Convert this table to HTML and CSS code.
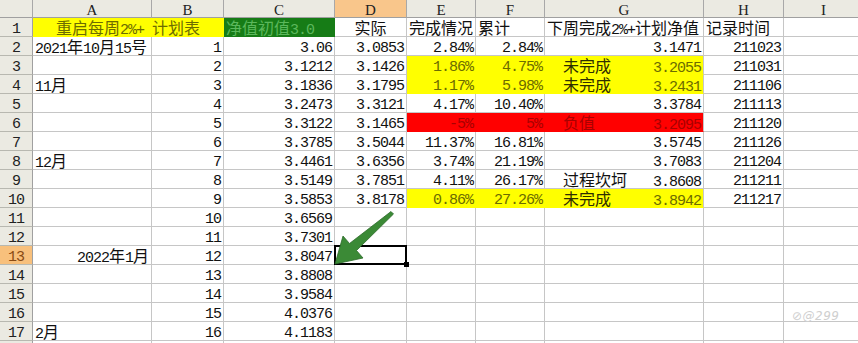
FILE: index.html
```html
<!DOCTYPE html>
<html lang="zh">
<head>
<meta charset="utf-8">
<title>计划表</title>
<link rel="stylesheet" href="styles.css">
</head>
<body>
<div class="wrap">
  <div class="sheet">
    <div class="ch corner"></div><div class="ch">A</div><div class="ch">B</div><div class="ch">C</div><div class="ch sel">D</div><div class="ch">E</div><div class="ch">F</div><div class="ch">G</div><div class="ch">H</div><div class="ch">I</div>

    <div class="rh">1</div>
    <div class="c y ctr span2">重启每周<span class="m">2%+ </span>计划表</div>
    <div class="c gr">净值初值<span class="m">3.0</span></div>
    <div class="c ctr">实际</div>
    <div class="c">完成情况</div>
    <div class="c">累计</div>
    <div class="c">下周完成<span class="m">2%+</span>计划净值</div>
    <div class="c">记录时间</div>
    <div class="c"></div>

    <div class="rh">2</div>
    <div class="c"><span class="m">2021</span>年<span class="m">10</span>月<span class="m">15</span>号</div>
    <div class="c n">1</div><div class="c n">3.06</div><div class="c n">3.0853</div><div class="c n">2.84%</div><div class="c n">2.84%</div><div class="c n">3.1471</div><div class="c n">211023</div><div class="c"></div>

    <div class="rh">3</div>
    <div class="c"></div>
    <div class="c n">2</div><div class="c n">3.1212</div><div class="c n">3.1426</div><div class="c n y">1.86%</div><div class="c n y">4.75%</div>
    <div class="c gl y"><span class="lbl">未完成</span><span class="m">3.2055</span></div>
    <div class="c n">211031</div><div class="c"></div>

    <div class="rh">4</div>
    <div class="c"><span class="m">11</span>月</div>
    <div class="c n">3</div><div class="c n">3.1836</div><div class="c n">3.1795</div><div class="c n y">1.17%</div><div class="c n y">5.98%</div>
    <div class="c gl y"><span class="lbl">未完成</span><span class="m">3.2431</span></div>
    <div class="c n">211106</div><div class="c"></div>

    <div class="rh">5</div>
    <div class="c"></div>
    <div class="c n">4</div><div class="c n">3.2473</div><div class="c n">3.3121</div><div class="c n">4.17%</div><div class="c n">10.40%</div><div class="c n">3.3784</div><div class="c n">211113</div><div class="c"></div>

    <div class="rh">6</div>
    <div class="c"></div>
    <div class="c n">5</div><div class="c n">3.3122</div><div class="c n">3.1465</div><div class="c n rd">-5%</div><div class="c n rd">5%</div>
    <div class="c gl rd"><span class="lbl">负值</span><span class="m">3.2095</span></div>
    <div class="c n">211120</div><div class="c"></div>

    <div class="rh">7</div>
    <div class="c"></div>
    <div class="c n">6</div><div class="c n">3.3785</div><div class="c n">3.5044</div><div class="c n">11.37%</div><div class="c n">16.81%</div><div class="c n">3.5745</div><div class="c n">211126</div><div class="c"></div>

    <div class="rh">8</div>
    <div class="c"><span class="m">12</span>月</div>
    <div class="c n">7</div><div class="c n">3.4461</div><div class="c n">3.6356</div><div class="c n">3.74%</div><div class="c n">21.19%</div><div class="c n">3.7083</div><div class="c n">211204</div><div class="c"></div>

    <div class="rh">9</div>
    <div class="c"></div>
    <div class="c n">8</div><div class="c n">3.5149</div><div class="c n">3.7851</div><div class="c n">4.11%</div><div class="c n">26.17%</div>
    <div class="c gl"><span class="lbl">过程坎坷</span><span class="m">3.8608</span></div>
    <div class="c n">211211</div><div class="c"></div>

    <div class="rh">10</div>
    <div class="c"></div>
    <div class="c n">9</div><div class="c n">3.5853</div><div class="c n">3.8178</div><div class="c n y">0.86%</div><div class="c n y">27.26%</div>
    <div class="c gl y"><span class="lbl">未完成</span><span class="m">3.8942</span></div>
    <div class="c n">211217</div><div class="c"></div>

    <div class="rh">11</div>
    <div class="c"></div><div class="c n">10</div><div class="c n">3.6569</div><div class="c"></div><div class="c"></div><div class="c"></div><div class="c"></div><div class="c"></div><div class="c"></div>

    <div class="rh">12</div>
    <div class="c"></div><div class="c n">11</div><div class="c n">3.7301</div><div class="c"></div><div class="c"></div><div class="c"></div><div class="c"></div><div class="c"></div><div class="c"></div>

    <div class="rh rsel">13</div>
    <div class="c ra"><span class="m">2022</span>年<span class="m">1</span>月</div><div class="c n">12</div><div class="c n">3.8047</div><div class="c active"></div><div class="c"></div><div class="c"></div><div class="c"></div><div class="c"></div><div class="c"></div>

    <div class="rh">14</div>
    <div class="c"></div><div class="c n">13</div><div class="c n">3.8808</div><div class="c"></div><div class="c"></div><div class="c"></div><div class="c"></div><div class="c"></div><div class="c"></div>

    <div class="rh">15</div>
    <div class="c"></div><div class="c n">14</div><div class="c n">3.9584</div><div class="c"></div><div class="c"></div><div class="c"></div><div class="c"></div><div class="c"></div><div class="c"></div>

    <div class="rh">16</div>
    <div class="c"></div><div class="c n">15</div><div class="c n">4.0376</div><div class="c"></div><div class="c"></div><div class="c"></div><div class="c"></div><div class="c"></div><div class="c"></div>

    <div class="rh">17</div>
    <div class="c"><span class="m">2</span>月</div><div class="c n">16</div><div class="c n">4.1183</div><div class="c"></div><div class="c"></div><div class="c"></div><div class="c"></div><div class="c"></div><div class="c"></div>

    <div class="rh"></div>
    <div class="c"></div><div class="c"></div><div class="c"></div><div class="c"></div><div class="c"></div><div class="c"></div><div class="c"></div><div class="c"></div><div class="c"></div>
  </div>

  <svg class="arrow" viewBox="0 0 858 343" width="858" height="343" aria-hidden="true">
    <polygon points="335,264 343,236 349.5,243.5 391,211.5 393.5,214 356.5,250.5 363,258" fill="#3b8a36" stroke="#2c6a2a" stroke-width="0.8" stroke-linejoin="round"/>
  </svg>

  <div class="mark">⊘@299</div>
</div>
</body>
</html>
```

FILE: styles.css
```css
html, body {
  margin: 0;
  padding: 0;
  background: #ffffff;
  overflow: hidden;
}

.wrap {
  position: relative;
  width: 858px;
  height: 343px;
  overflow: hidden;
}

.sheet {
  display: grid;
  grid-template-columns: 33px 119px 72px 111px 72px 69px 69px 159px 80px 80px;
  grid-template-rows: 18px repeat(18, 19px);
}

.ch, .rh, .c {
  box-sizing: border-box;
  white-space: nowrap;
}

.ch {
  background: #ebeae2;
  border-right: 1px solid #a8a8a8;
  border-bottom: 1px solid #a0a0a0;
  font: 15px/18px "Liberation Serif", serif;
  text-align: center;
  padding-top: 1px;
  color: #222;
}

.ch.sel {
  background: #f9c68b;
}

.rh {
  background: #ebeae2;
  border-right: 1px solid #a0a0a0;
  border-bottom: 1px solid #b8b8b0;
  font: 15px/18px "Liberation Mono", monospace;
  letter-spacing: -1px;
  text-align: center;
  padding-top: 3px;
  color: #222;
}

.rh.rsel {
  background: #f8c07c;
  color: #8a4a12;
}

.c {
  border-right: 1px solid #c6c6c6;
  border-bottom: 1px solid #c6c6c6;
  padding: 0 2px;
  font: 16px/18px "Noto Sans CJK SC", sans-serif;
  color: #111;
}

.n {
  font: 15px/18px "Liberation Mono", monospace;
  letter-spacing: -1px;
  padding-top: 3px;
  text-align: right;
}

.m {
  font: 15px/18px "Liberation Mono", monospace;
  letter-spacing: -1px;
}

.ctr {
  text-align: center;
}

.ra {
  text-align: right;
}

.span2 {
  grid-column: span 2;
}

.y {
  background: #ffff00;
  border-right-color: #ffff00;
  border-bottom-color: #ffff00;
  color: #6c6c00;
}

.y .lbl {
  color: #2e2e00;
}

.rd {
  background: #ff0000;
  border-right-color: #ff0000;
  border-bottom-color: #ff0000;
  color: #a80000;
}

.gr {
  background: #167c16;
  border-right-color: #167c16;
  border-bottom-color: #167c16;
  color: #5cb85c;
}

.gl {
  display: flex;
  justify-content: space-between;
  align-items: baseline;
}

.gl.y, .gl.rd {
  border-right-color: #c6c6c6;
}

.gl .lbl {
  padding-left: 16px;
}

.active {
  position: relative;
  z-index: 2;
}

.active::after {
  content: "";
  position: absolute;
  left: -1px;
  top: -1px;
  right: -1px;
  bottom: -1px;
  border: 2px solid #000;
}

.active::before {
  content: "";
  position: absolute;
  right: -3px;
  bottom: -3px;
  width: 5px;
  height: 5px;
  background: #000;
  z-index: 3;
}

.arrow {
  position: absolute;
  left: 0;
  top: 0;
  pointer-events: none;
  z-index: 5;
}

.mark {
  position: absolute;
  left: 792px;
  top: 309px;
  font: italic 12px/14px "DejaVu Sans", sans-serif;
  color: #cfcfcf;
  letter-spacing: 0.5px;
}
```
